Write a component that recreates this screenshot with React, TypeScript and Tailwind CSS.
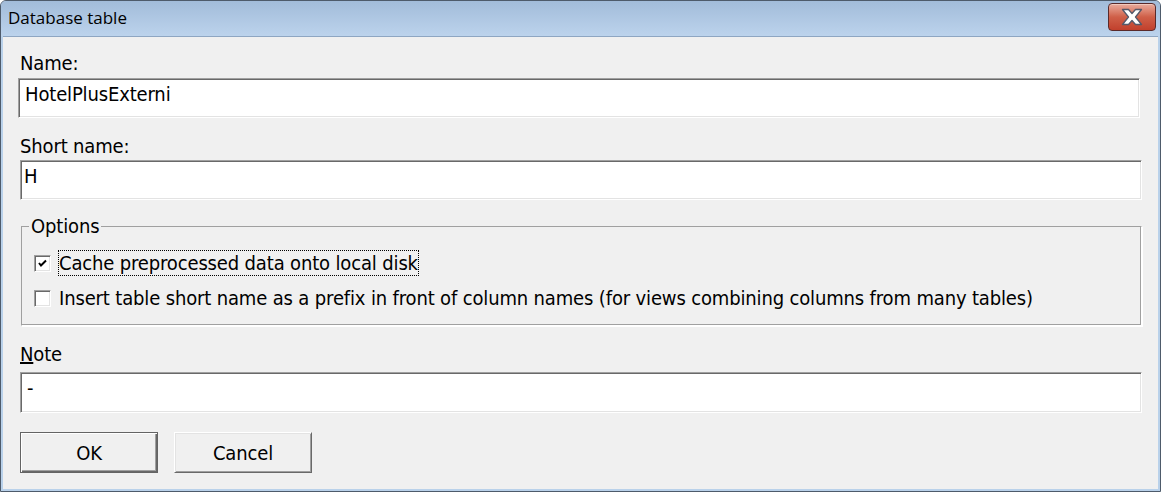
import React from 'react'

const tahoma = "font-['DejaVu_Sans_Condensed','DejaVu_Sans',sans-serif] tracking-[-0.15px]"

function Sunken({ value, className = '' }: { value: string; className?: string }) {
  return (
    <div
      className={`shrink-0 bg-white border border-t-[#a0a0a0] border-l-[#a0a0a0] border-b-white border-r-white shadow-[inset_1px_1px_0_#696969,inset_-1px_-1px_0_#e3e3e3] pt-[3px] text-[20px] leading-[24px] text-black ${className}`}
    >
      {value}
    </div>
  )
}

function CheckBox({ checked }: { checked: boolean }) {
  return (
    <div className="w-[17px] h-[17px] bg-white border border-t-[#a0a0a0] border-l-[#a0a0a0] border-b-white border-r-white shadow-[inset_1px_1px_0_#696969,inset_-1px_-1px_0_#e3e3e3] flex items-center justify-center shrink-0">
      {checked && (
        <svg width="9" height="9" viewBox="0 0 9 9">
          <path d="M1 4 L3 6.5 L8 1.5" stroke="#000" strokeWidth="2" fill="none" />
        </svg>
      )}
    </div>
  )
}

function Button({ label, isDefault }: { label: string; isDefault?: boolean }) {
  return (
    <div
      className={`w-[138px] h-[41px] bg-[#f0f0f0] flex items-center justify-center text-[20px] text-black ${
        isDefault
          ? 'border border-[#646464] shadow-[inset_1px_1px_0_#ffffff,inset_-1px_-1px_0_#696969,inset_-2px_-2px_0_#a0a0a0]'
          : 'border border-t-white border-l-white border-b-[#696969] border-r-[#696969] shadow-[inset_1px_1px_0_#e3e3e3,inset_-1px_-1px_0_#a0a0a0]'
      }`}
    >
      {label}
    </div>
  )
}

export default function App() {
  return (
    <div className={`w-[1161px] h-[492px] bg-[#b9d1ea] border border-[#4e5b6b] rounded-t-[6px] flex flex-col overflow-hidden ${tahoma}`}>
      {/* title bar */}
      <div className="h-[35px] shrink-0 bg-gradient-to-b from-[#a2bcda] to-[#bcd3ec] flex items-center justify-between pl-[7px] pr-[4px]">
        <span className="text-[17px] tracking-normal text-black font-['Open_Sans','Noto_Sans',sans-serif] pb-[2px]">Database table</span>
        <div className="w-[48px] h-[28px] -mt-[4px] rounded-[4px] border border-[#5a2a2a] bg-gradient-to-b from-[#e8ab9d] via-[#cf5f48] to-[#c1402c] flex items-center justify-center shadow-[inset_0_1px_0_#f2c8bc]">
          <svg width="24" height="18" viewBox="0 0 24 18">
            <path
              d="M2.5 1.5 H8.5 L12 5.5 L15.5 1.5 H21.5 L15.5 9 L21.5 16.5 H15.5 L12 12.5 L8.5 16.5 H2.5 L8.5 9 Z"
              fill="#ffffff"
              stroke="#55596a"
              strokeWidth="1.3"
              strokeLinejoin="round"
            />
          </svg>
        </div>
      </div>

      {/* client area */}
      <div className="flex-1 mx-[2px] mb-[2px] bg-[#f0f0f0] border-t border-[#8ea6c2] flex flex-col pl-[17px] pr-[16px] text-black">
        <div className="shrink-0 mt-[14px] h-[24px] text-[20px] leading-[24px]">Name:</div>
        <Sunken value="HotelPlusExterni" className="h-[40px] mt-[3px] -ml-[2px] mr-[2px] pl-[6px]" />

        <div className="shrink-0 mt-[16px] h-[24px] text-[20px] leading-[24px]">Short name:</div>
        <Sunken value="H" className="h-[40px] mt-[2px] pl-[3px]" />

        <fieldset className="shrink-0 mt-[14px] ml-[1px] h-[112px] border border-t-[#a0a0a0] border-l-[#a0a0a0] border-b-white border-r-white shadow-[inset_-1px_-1px_0_#a0a0a0,1px_1px_0_#ffffff] px-[10px] pt-[12px]">
          <legend className="-ml-[3px] px-[2px] text-[20px] leading-[24px]">Options</legend>
          <div className="flex items-center h-[26px] pl-[2px]">
            <CheckBox checked />
            <span className="ml-[7px] border border-dotted border-black leading-[24px] text-[20px]">
              Cache preprocessed data onto local disk
            </span>
          </div>
          <div className="flex items-center h-[26px] pl-[2px] mt-[9px]">
            <CheckBox checked={false} />
            <span className="ml-[8px] text-[20px] leading-[24px]">
              Insert table short name as a prefix in front of column names (for views combining columns from many tables)
            </span>
          </div>
        </fieldset>

        <div className="shrink-0 mt-[16px] h-[24px] text-[20px] leading-[24px]">
          <span className="underline underline-offset-[1px]">N</span>ote
        </div>
        <Sunken value="-" className="h-[41px] mt-[6px] pl-[6px]" />

        <div className="shrink-0 mt-[19px] flex gap-[16px]">
          <Button label="OK" isDefault />
          <Button label="Cancel" />
        </div>
      </div>
    </div>
  )
}
